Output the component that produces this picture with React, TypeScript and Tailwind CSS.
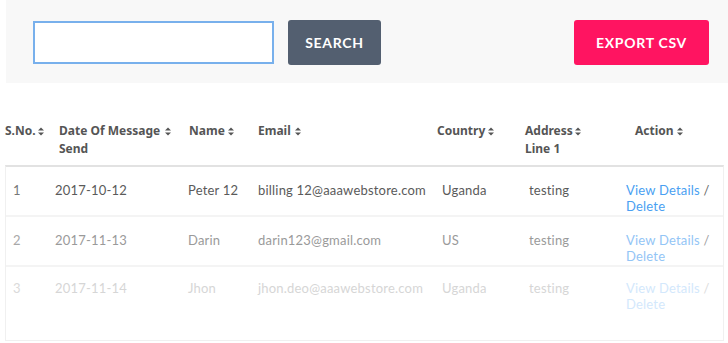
import React from "react";

type Row = {
    no: string;
    date: string;
    name: string;
    email: string;
    country: string;
    address: string;
};

const rows: Row[] = [
    {no: "1", date: "2017-10-12", name: "Peter 12", email: "billing 12@aaawebstore.com", country: "Uganda", address: "testing"},
    {no: "2", date: "2017-11-13", name: "Darin", email: "darin123@gmail.com", country: "US", address: "testing"},
    {no: "3", date: "2017-11-14", name: "Jhon", email: "jhon.deo@aaawebstore.com", country: "Uganda", address: "testing"},
];

// fade the rows out toward the bottom
const rowTone = [
    {text: "text-[#5a5a5a]", link: "text-[#4a9ff2]", slash: "text-[#666666]", first: "text-[#777777]", pad: "pt-[15px] h-[50px]"},
    {text: "text-[#9a9a9a]", link: "text-[#93c5f6]", slash: "text-[#a0a0a0]", first: "text-[#a8a8a8]", pad: "pt-[15px] h-[50px]"},
    {text: "text-[#d6d6d6]", link: "text-[#d3e8fc]", slash: "text-[#dcdcdc]", first: "text-[#dadada]", pad: "pt-[13px]"},
];

const cols = `grid grid-cols-[53px_129px_71px_179px_88px_99px_99px]`;

function SortIcon() {
    return (
        <svg width="6" height="9" viewBox="0 0 6 9" className="mt-[5px] shrink-0">
            <path d="M0 3.6 L3 0.4 L6 3.6 Z" fill="#555555" />
            <path d="M0 5.4 L3 8.6 L6 5.4 Z" fill="#555555" />
        </svg>
    );
}

function HeadCell({lines, pad, gap}: { lines: string[]; pad: string; gap: string }) {
    return (
        <div className={`${pad} flex flex-col`}>
            <div className="flex items-start">
                <span>{lines[0]}</span>
                <span className={gap}><SortIcon /></span>
            </div>
            {lines[1] && <span>{lines[1]}</span>}
        </div>
    );
}

function Toolbar() {
    const btn = `h-[45px] rounded-[3px] text-white text-[14px] font-bold tracking-[0.7px] flex items-center justify-center`;

    return (
        <div className="ml-[6px] h-[83px] bg-[#f8f8f8] flex items-center pt-[2px] pl-[27px] pr-[19px]">
            <input
                className="w-[241px] h-[43px] bg-white border-2 border-[#78b0ec] outline-none"
            />
            <button className={`${btn} ml-[14px] w-[93px] bg-[#535f70]`}>SEARCH</button>
            <button className={`${btn} ml-auto w-[135px] bg-[#ff1461]`}>EXPORT CSV</button>
        </div>
    );
}

export default function App() {
    return (
        <div className="w-[728px] h-[343px] bg-white overflow-hidden font-['Lato',sans-serif]">
            <Toolbar />
            <div className="ml-[5px] w-[719px]">
                <div className={`${cols} pt-[39px] pb-[7px] text-[12px] leading-[18px] font-bold text-[#555555] font-['Noto_Sans',sans-serif]`}>
                    <HeadCell lines={["S.No."]} pad="" gap="ml-[2px]" />
                    <HeadCell lines={["Date Of Message", "Send"]} pad="pl-[1px]" gap="ml-[5px]" />
                    <HeadCell lines={["Name"]} pad="pl-[2px]" gap="ml-[3px]" />
                    <HeadCell lines={["Email"]} pad="" gap="ml-[4px]" />
                    <HeadCell lines={["Country"]} pad="" gap="ml-[3px]" />
                    <HeadCell lines={["Address", "Line 1"]} pad="" gap="ml-[2px]" />
                    <HeadCell lines={["Action"]} pad="pl-[11px]" gap="ml-[3px]" />
                </div>
                <div className="h-[176px] border-t-2 border-t-[#e2e2e2] border-x border-b border-[#f0f0f0] text-[13px] leading-[16px] tracking-[0.2px]">
                    {rows.map((r, i) => {
                        const tone = rowTone[i];
                        return (
                            <div
                                key={r.no}
                                className={`${cols} ${i < 2 ? "border-b-2 border-[#f4f4f4]" : ""} ${tone.pad} ${tone.text}`}
                            >
                                <span className={`pl-[7px] ${tone.first}`}>{r.no}</span>
                                <span className="-ml-[4px]">{r.date}</span>
                                <span className="">{r.name}</span>
                                <span className="-ml-[1px] whitespace-nowrap">{r.email}</span>
                                <span className="pl-[4px]">{r.country}</span>
                                <span className="pl-[3px]">{r.address}</span>
                                <span className="pl-[1px]">
                                    <a className={tone.link}>View Details</a>
                                    <span className={tone.slash}> / </span>
                                    <a className={tone.link}>Delete</a>
                                </span>
                            </div>
                        );
                    })}
                </div>
            </div>
        </div>
    );
}
